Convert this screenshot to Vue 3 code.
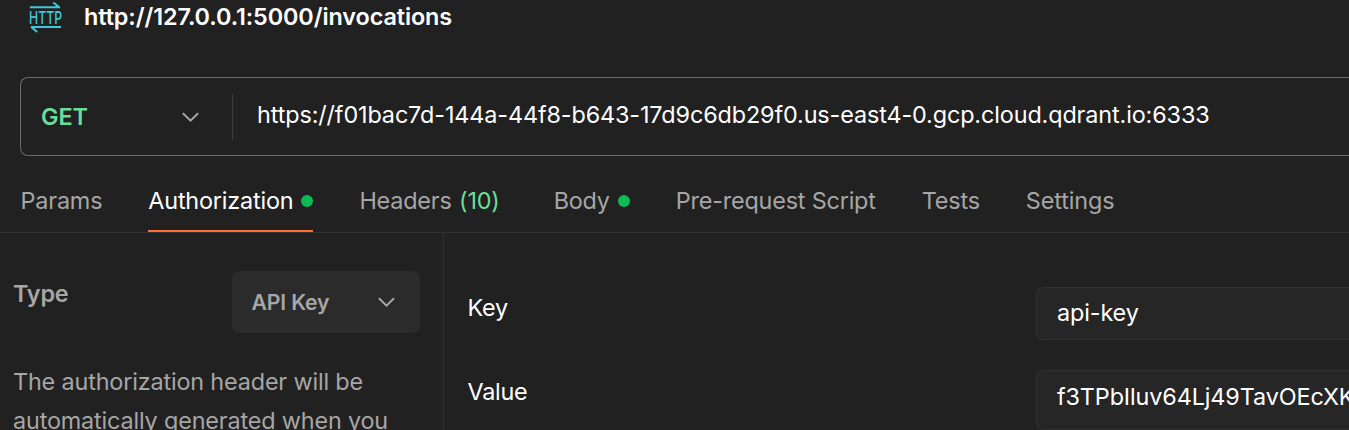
<script setup>
const tabs = [
  { label: 'Params' },
  { label: 'Authorization', dot: true, active: true },
  { label: 'Headers', count: '(10)' },
  { label: 'Body', dot: true },
  { label: 'Pre-request Script' },
  { label: 'Tests' },
  { label: 'Settings' }
]
const fields = [
  { label: 'Key', value: 'api-key' },
  { label: 'Value', value: 'f3TPbIluv64Lj49TavOEcXK' }
]
</script>

<template>
  <main class="request">
    <header class="title">
      <svg class="http" width="32" height="32" viewBox="0 0 32 32">
        <path d="M1 6.3H31M24.3 1.5L30.3 6.3M32 26H2M2.2 26L8.2 31" />
        <text x="0" y="22.8" textLength="33" lengthAdjust="spacingAndGlyphs">HTTP</text>
      </svg>
      <h1>http://127.0.0.1:5000/invocations</h1>
    </header>

    <section class="urlbar">
      <div class="method">
        <span>GET</span>
        <svg class="chevron" width="18" height="12" viewBox="0 0 18 12"><path d="M1.9 2.2L9.5 9.6L17.1 2.2" /></svg>
      </div>
      <div class="url">https://f01bac7d-144a-44f8-b643-17d9c6db29f0.us-east4-0.gcp.cloud.qdrant.io:6333</div>
    </section>

    <nav class="tabs">
      <div v-for="tab in tabs" :key="tab.label" class="tab" :class="{ active: tab.active }">
        <span>{{ tab.label }}</span>
        <span v-if="tab.count" class="count">{{ tab.count }}</span>
        <i v-if="tab.dot" class="dot"></i>
      </div>
    </nav>

    <section class="panel">
      <aside class="side">
        <div class="type-row">
          <span class="type">Type</span>
          <div class="select">
            <span>API Key</span>
            <svg class="chevron" width="18" height="12" viewBox="0 0 18 12"><path d="M1.9 2.2L9.5 9.6L17.1 2.2" /></svg>
          </div>
        </div>
        <p>The authorization header will be<br>automatically generated when you</p>
      </aside>
      <div class="fields">
        <div v-for="field in fields" :key="field.label" class="field">
          <span class="label">{{ field.label }}</span>
          <div class="input">{{ field.value }}</div>
        </div>
      </div>
    </section>
  </main>
</template>

<style>
body {
  background: #212121;
}
</style>

<style scoped>
* {
  box-sizing: border-box;
}
.request {
  height: 430px;
  overflow: hidden;
  display: flex;
  flex-direction: column;
  background: #212121;
  color: #fff;
  font: 400 23.4px/30px Inter, sans-serif;
  letter-spacing: -0.12px;
  white-space: nowrap;
}
.title {
  display: flex;
  flex: none;
  height: 77px;
  padding: 1px 0 0 29px;
}
.http {
  flex: none;
  margin-right: 23px;
  overflow: visible;
  fill: none;
  stroke: #3dc9dc;
  stroke-width: 2;
}
.http text {
  font: 500 17.6px Inter, sans-serif;
  letter-spacing: 0;
  fill: #3dc9dc;
  stroke: none;
}
h1 {
  margin: 1px 0 0;
  font-size: 23.4px;
  line-height: 30px;
  font-weight: 600;
  letter-spacing: -0.1px;
}
.urlbar {
  display: flex;
  flex: none;
  align-items: center;
  height: 79px;
  margin-left: 20px;
  border: 1px solid #6b6b6b;
  border-right: 0;
  border-radius: 8px 0 0 8px;
}
.method {
  display: flex;
  align-items: center;
  justify-content: space-between;
  width: 212px;
  height: 46px;
  padding: 0 33px 0 20px;
  border-right: 1px solid #3d3d3d;
  color: #6bdd9a;
  font-weight: 600;
}
.chevron {
  flex: none;
  fill: none;
  stroke: #a6a6a6;
  stroke-width: 1.9;
}
.url {
  padding: 0 0 3px 24px;
}
.tabs {
  display: flex;
  flex: none;
  gap: 46px;
  height: 77px;
  padding: 0 0 0 20.6px;
  border-bottom: 1px solid #303030;
  color: #a6a6a6;
  letter-spacing: -0.19px;
}
.tab {
  display: flex;
  align-items: center;
  padding: 16px 0 0;
  border-bottom: 2px solid transparent;
}
.tab.active {
  color: #fff;
  border-color: #ff6c37;
}
.tab:last-child {
  letter-spacing: -0.1px;
}
.count {
  margin: 0 8px 0 7.5px;
  color: #6bdd9a;
}
.dot {
  width: 12px;
  height: 12px;
  margin-left: 8px;
  border-radius: 50%;
  background: #0cbb52;
}
.panel {
  display: flex;
  flex: 1;
  min-height: 0;
}
.side {
  flex: none;
  width: 444px;
  padding: 38px 23px 0 13px;
  border-right: 1px solid #303030;
  color: #a6a6a6;
  letter-spacing: -0.16px;
}
.type-row {
  display: flex;
  justify-content: space-between;
  align-items: flex-start;
}
.type {
  padding-top: 8px;
  font-weight: 600;
}
.select {
  display: flex;
  align-items: center;
  justify-content: space-between;
  width: 188px;
  height: 62px;
  padding: 0 25px 0 19.5px;
  border-radius: 7px;
  background: #2b2b2b;
  font-size: 21.2px;
  font-weight: 600;
}
p {
  margin: 29px 0 0;
  line-height: 39px;
}
.fields {
  flex: 1;
  min-width: 0;
  display: flex;
  flex-direction: column;
  gap: 30px;
  padding: 54px 0 0 23.5px;
}
.field {
  display: flex;
  flex: none;
  align-items: flex-start;
}
.label {
  width: 568.5px;
  flex: none;
  padding-top: 6px;
  letter-spacing: -0.25px;
}
.input {
  flex: 1;
  min-width: 0;
  height: 53px;
  overflow: hidden;
  padding: 10px 0 0 20px;
  border: 1px solid #303030;
  border-right: 0;
  border-radius: 7px 0 0 7px;
  background: #262626;
}
.field:last-child .label {
  padding-top: 7px;
}
.field:last-child .input {
  height: 60px;
  padding-top: 11px;
}
</style>
